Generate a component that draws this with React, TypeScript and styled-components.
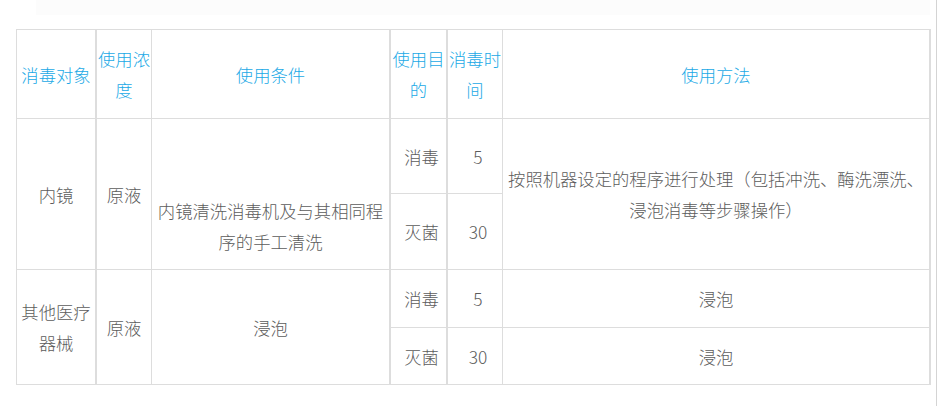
import { FC, ReactElement } from 'react';
import styled, { createGlobalStyle } from 'styled-components';

const Global = createGlobalStyle`
    html, body {
        margin: 0;
        padding: 0;
        background: #ffffff;
    }
    body {
        font-family: 'Noto Sans CJK SC', 'Microsoft YaHei', sans-serif;
    }
`;

type CellProps = {
    $col: number;
    $row: number;
    $span?: number;
    $thick?: boolean;
    $head?: boolean;
    $padTop?: number;
    $padLeft?: number;
    $padX?: number;
};

const App: FC<any> = (): ReactElement => {
    return (
        <Page>
            <Global />
            <TopBand />
            <Table>
                <Cell $head $col={1} $row={1} $thick>消毒对象</Cell>
                <Cell $head $col={2} $row={1}>使用浓度</Cell>
                <Cell $head $col={3} $row={1} $thick>使用条件</Cell>
                <Cell $head $col={4} $row={1} $thick>使用目的</Cell>
                <Cell $head $col={5} $row={1}>消毒时间</Cell>
                <Cell $head $col={6} $row={1} $thick>使用方法</Cell>

                <Cell $col={1} $row={2} $span={2} $thick>内镜</Cell>
                <Cell $col={2} $row={2} $span={2}>原液</Cell>
                <Cell $col={3} $row={2} $span={2} $thick $padTop={63} $padX={5}>
                    内镜清洗消毒机及与其相同程序的手工清洗
                </Cell>
                <Cell $col={4} $row={2} $thick $padLeft={6}>消毒</Cell>
                <Cell $col={5} $row={2} $padLeft={6}>5</Cell>
                <Cell $col={4} $row={3} $thick $padLeft={6}>灭菌</Cell>
                <Cell $col={5} $row={3} $padLeft={6}>30</Cell>
                <Cell $col={6} $row={2} $span={2} $thick $padX={2}>
                    按照机器设定的程序进行处理（包括冲洗、酶洗漂洗、浸泡消毒等步骤操作）
                </Cell>

                <Cell $col={1} $row={4} $span={2} $thick>其他医疗器械</Cell>
                <Cell $col={2} $row={4} $span={2}>原液</Cell>
                <Cell $col={3} $row={4} $span={2} $thick>浸泡</Cell>
                <Cell $col={4} $row={4} $thick $padLeft={6}>消毒</Cell>
                <Cell $col={5} $row={4} $padLeft={6}>5</Cell>
                <Cell $col={6} $row={4} $thick>浸泡</Cell>
                <Cell $col={4} $row={5} $thick $padLeft={6}>灭菌</Cell>
                <Cell $col={5} $row={5} $padLeft={6}>30</Cell>
                <Cell $col={6} $row={5} $thick>浸泡</Cell>
            </Table>
        </Page>
    );
};

const Page = styled.div`
    width: 936px;
    height: 406px;
    border-right: 1px solid #d4d4d4;
    box-sizing: content-box;
    display: flex;
    flex-direction: column;
    align-items: flex-start;
`;
const TopBand = styled.div`
    width: 894px;
    height: 15px;
    margin-left: 36px;
    background: #fcfcfc;
`;
const Table = styled.div`
    margin-top: 14px;
    margin-left: 16px;
    display: grid;
    grid-template-columns: 80px 55px 239px 57px 55px 428px;
    grid-template-rows: 89px 75px 76px 58px 57px;
    border-top: 1px solid #dddddd;
    border-left: 1px solid #dddddd;
`;
const Cell = styled.div<CellProps>`
    grid-column: ${(p) => p.$col};
    grid-row: ${(p) => p.$row} / span ${(p) => p.$span || 1};
    box-sizing: border-box;
    display: flex;
    align-items: center;
    justify-content: center;
    text-align: center;
    border-right: ${(p) => (p.$thick ? 2 : 1)}px solid #dddddd;
    border-bottom: 1px solid #dddddd;
    padding: ${(p) => p.$padTop || 0}px ${(p) => p.$padX || 0}px 0 ${(p) => p.$padLeft || p.$padX || 0}px;
    font-size: 17.33px;
    font-weight: 300;
    line-height: 31px;
    color: ${(p) => (p.$head ? '#1aa9e6' : '#5c5c5c')};
`;

export default App;
